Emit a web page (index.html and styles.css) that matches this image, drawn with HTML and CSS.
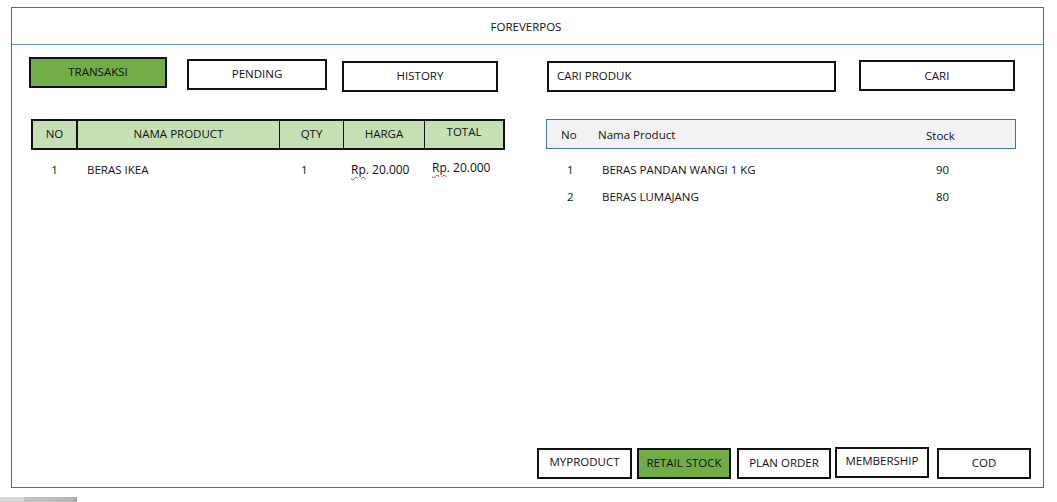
FILE: index.html
```html
<!DOCTYPE html>
<html>
<head>
<meta charset="utf-8">
<link rel="stylesheet" href="styles.css">
</head>
<body>
<div class="frame">
  <div class="header">FOREVERPOS</div>
  <div class="main">
    <div class="columns">
      <div class="left">
        <div class="toolbar">
          <div class="btn btn-green btn-transaksi">TRANSAKSI</div>
          <div class="btn btn-pending">PENDING</div>
          <div class="btn btn-history">HISTORY</div>
        </div>
        <div class="cart">
          <div class="cart-head">
            <div class="hc c-no thick">NO</div>
            <div class="hc c-name">NAMA PRODUCT</div>
            <div class="hc c-qty">QTY</div>
            <div class="hc c-harga">HARGA</div>
            <div class="hc c-total raised">TOTAL</div>
          </div>
          <div class="cart-row">
            <div class="rc c-no center">1</div>
            <div class="rc c-name name-pad">BERAS IKEA</div>
            <div class="rc c-qty qty-pad">1</div>
            <div class="rc c-harga money-pad"><span class="spell">Rp</span>. 20.000</div>
            <div class="rc c-total money-pad raised"><span class="spell">Rp</span>. 20.000</div>
          </div>
        </div>
      </div>
      <div class="right">
        <div class="search">
          <div class="btn search-input">CARI PRODUK</div>
          <div class="btn btn-cari">CARI</div>
        </div>
        <div class="stock">
          <div class="stock-head">
            <div class="sh-no">No</div>
            <div class="sh-name">Nama Product</div>
            <div class="sh-stock">Stock</div>
          </div>
          <div class="stock-row">
            <div class="sr-no">1</div>
            <div class="sr-name">BERAS PANDAN WANGI 1 KG</div>
            <div class="sr-stock">90</div>
          </div>
          <div class="stock-row">
            <div class="sr-no">2</div>
            <div class="sr-name">BERAS LUMAJANG</div>
            <div class="sr-stock">80</div>
          </div>
        </div>
      </div>
    </div>
    <div class="bottom">
      <div class="btn bb bb-my">MYPRODUCT</div>
      <div class="btn bb btn-green bb-retail">RETAIL STOCK</div>
      <div class="btn bb bb-plan">PLAN ORDER</div>
      <div class="btn bb bb-member">MEMBERSHIP</div>
      <div class="btn bb bb-cod">COD</div>
    </div>
  </div>
</div>
<div class="scrollbar"></div>
</body>
</html>
```

FILE: styles.css
```css
* { box-sizing: border-box; }
html, body { margin: 0; padding: 0; background: #fff; }
body {
  font-family: "Open Sans", "Liberation Sans", sans-serif;
  font-size: 11.5px;
  color: #111;
  width: 1057px;
  height: 502px;
  overflow: hidden;
}
.frame {
  margin: 7px 0 0 11px;
  width: 1033px;
  height: 481px;
  border: 1px solid #43709f;
  display: flex;
  flex-direction: column;
}
.header {
  height: 37px;
  border-bottom: 1px solid #5b9bd5;
  display: flex;
  align-items: center;
  justify-content: center;
  padding-top: 1px;
  padding-right: 3px;
}
.main {
  flex: 1;
  display: flex;
  flex-direction: column;
  padding: 0 12px 8px 17px;
}
.columns {
  flex: 1;
  display: flex;
  gap: 41px;
}
.left { width: 476px; }
.right { width: 470px; }
.btn {
  border: 2px solid #111;
  height: 31px;
  display: flex;
  align-items: center;
  justify-content: center;
  background: #fff;
}
.btn-green { background: #70ad47; }
.toolbar {
  display: flex;
  align-items: flex-start;
  padding-top: 12px;
}
.btn-transaksi { width: 138px; padding-bottom: 2px; }
.btn-pending { width: 140px; margin: 2px 0 0 20px; padding-bottom: 2px; }
.btn-history { width: 156px; margin: 4px 0 0 15px; padding-bottom: 2px; }
.cart { margin: 27px 0 0 2px; width: 474px; }
.cart-head {
  display: flex;
  height: 31px;
  background: #c5e0b4;
  border: 2px solid #111;
}
.hc {
  display: flex;
  align-items: center;
  justify-content: center;
  border-left: 1px solid #111;
  padding-bottom: 2px;
}
.hc.c-no { border-left: none; }
.thick { border-right: 2px solid #111; }
.c-no { width: 45px; }
.c-name { width: 201px; }
.hc.c-name { border-left: none; }
.c-qty { width: 64px; }
.c-harga { width: 81px; }
.c-total { flex: 1; }
.hc.raised { padding-bottom: 6px; }
.cart-row {
  display: flex;
  height: 38px;
  align-items: center;
  padding-top: 1px;
}
.rc.c-no { width: 47px; }
.rc.c-name { width: 201px; }
.center { text-align: center; }
.name-pad { padding-left: 9px; }
.qty-pad { padding-left: 22px; }
.money-pad { padding-left: 8px; font-size: 12px; }
.rc.raised { padding-bottom: 4px; }
.spell {
  text-decoration: underline wavy #e03030;
  text-decoration-thickness: 1px;
  text-underline-offset: 2px;
}
.search {
  display: flex;
  align-items: flex-start;
  padding-top: 16px;
}
.search-input {
  width: 289px;
  margin-left: 1px;
  justify-content: flex-start;
  padding-left: 8px;
  padding-bottom: 2px;
}
.btn-cari { width: 156px; margin: -1px 0 0 23px; padding-bottom: 0; }
.stock { margin-top: 27px; }
.stock-head {
  display: grid;
  grid-template-columns: 51px 328px 1fr;
  height: 30px;
  align-items: center;
  background: #f2f2f2;
  border: 1px solid #43709f;
}
.sh-no { padding-left: 14px; }
.sh-stock { padding-top: 2px; }
.stock-row {
  display: grid;
  grid-template-columns: 51px 328px 1fr;
  height: 27px;
  align-items: center;
}
.stock-head + .stock-row { margin-top: 7px; }
.sr-no { padding-left: 21px; }
.sr-name { padding-left: 5px; }
.sr-stock { padding-left: 11px; }
.bottom {
  display: flex;
  justify-content: flex-end;
  align-items: flex-end;
}
.bb { width: 94px; padding-bottom: 2px; }
.bb-my { width: 95px; padding-bottom: 5px; }
.bb-retail { margin-left: 5px; }
.bb-plan { margin-left: 6px; }
.bb-member { margin-left: 4px; margin-bottom: 1px; padding-bottom: 4px; }
.bb-cod { margin-left: 8px; }
.scrollbar {
  margin-top: 9px;
  width: 77px;
  height: 5px;
  background: linear-gradient(to right, #d6d6d6 0, #d6d6d6 24px, #c4c4c4 24px, #b8b8b8 72px, #9a9a9a 77px);
}
```
